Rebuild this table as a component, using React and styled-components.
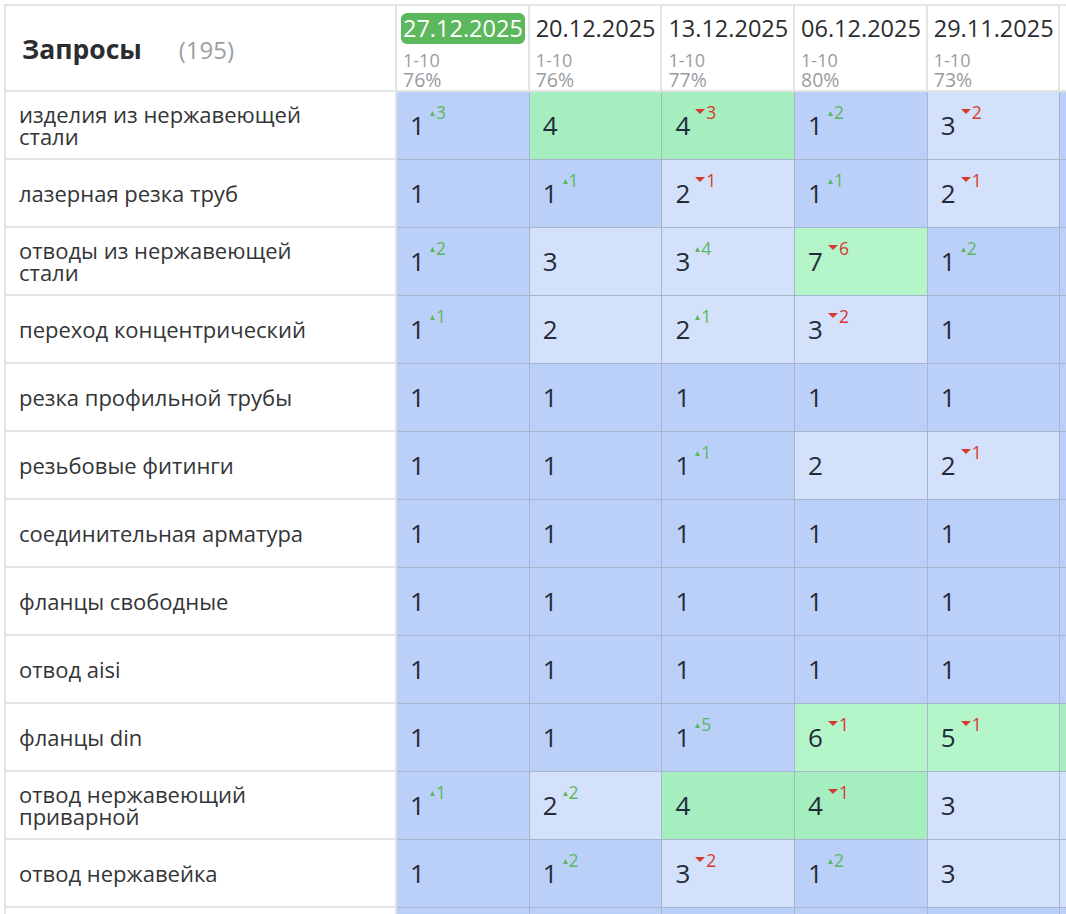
import React from "react";
import styled, { createGlobalStyle } from "styled-components";

const Global = createGlobalStyle`
  html, body { margin: 0; padding: 0; background: #fff; overflow: hidden; }
  body { font-family: "Open Sans", "Noto Sans", sans-serif; }
`;

const Page = styled.div`
  padding: 4px 0 0 4px;
  width: 1066px;
  height: 914px;
  box-sizing: border-box;
  overflow: hidden;
`;

const Grid = styled.div`
  display: grid;
  grid-template-columns: 391px repeat(6, 132.7px);
  grid-template-rows: 86px;
  grid-auto-rows: 68px;
  border-top: 2px solid #e3e3e3;
  border-left: 2px solid #e3e3e3;
  width: max-content;
`;

const TitleCell = styled.div`
  box-sizing: border-box;
  border-right: 2px solid #e3e3e3;
  border-bottom: 2px solid #e3e3e3;
  display: flex;
  align-items: center;
  padding: 2px 0 0 16px;
  gap: 37px;
`;

const Title = styled.span`
  font-size: 26.5px;
  font-weight: 700;
  color: #2b2d31;
`;

const Count = styled.span`
  font-size: 24px;
  color: #9b9ea4;
`;

const DateCell = styled.div`
  box-sizing: border-box;
  border-right: 2px solid #e3e3e3;
  border-bottom: 2px solid #e3e3e3;
  padding: 7px 0 0 4px;
  display: flex;
  flex-direction: column;
  align-items: flex-start;
  white-space: nowrap;
`;

const DateLabel = styled.span`
  font-size: 23.5px;
  line-height: 31px;
  height: 31px;
  padding: 0 2px;
  border-radius: 6px;
  color: ${(p) => (p.$current ? "#fff" : "#2b2d31")};
  background: ${(p) => (p.$current ? "#5cb85c" : "transparent")};
`;

const MetaBlock = styled.div`
  display: flex;
  flex-direction: column;
  margin-top: 7px;
  padding-left: 2px;
`;

const Meta = styled.span`
  font-size: ${(p) => p.$size}px;
  line-height: 19px;
  color: #9a9ca2;
`;

const NameCell = styled.div`
  box-sizing: border-box;
  border-right: 2px solid #e3e3e3;
  border-bottom: 2px solid #e3e3e3;
  display: flex;
  align-items: center;
  padding: 0 0 1px 13px;
  background: #fff;
`;

const Name = styled.span`
  max-width: 300px;
  font-size: 22px;
  line-height: 22px;
  color: #333538;
`;

const bg = {
  mid: "#bad0f9",
  light: "#d3e1fb",
  green: "#a4eebf",
  lgreen: "#b4f5ca",
};

const ValueCell = styled.div`
  box-sizing: border-box;
  border-right: 1.5px solid #a9b5cd;
  border-bottom: 1.5px solid #a9b5cd;
  background: ${(p) => bg[p.$tone]};
  display: flex;
  align-items: center;
  padding: 0 0 1px 13px;
`;

const Value = styled.span`
  font-size: 26px;
  line-height: 30px;
  color: #242b38;
`;

const Delta = styled.span`
  display: inline-flex;
  align-items: center;
  gap: 1px;
  margin-left: 5px;
  align-self: flex-start;
  margin-top: 11px;
  font-size: 17.5px;
  line-height: 18px;
  color: ${(p) => (p.$up ? "#5cb85c" : "#d63a2f")};
`;

const Tri = styled.svg`
  display: block;
  margin-top: ${(p) => (p.$up ? "2px" : "-2px")};
`;

const dates = [
  { d: "27.12.2025", pct: "76%", current: true },
  { d: "20.12.2025", pct: "76%" },
  { d: "13.12.2025", pct: "77%" },
  { d: "06.12.2025", pct: "80%" },
  { d: "29.11.2025", pct: "73%" },
  { d: "22.11.2025", pct: "75%" },
];

// value, delta (positive = up, negative = down)
const rows = [
  ["изделия из нержавеющей стали", [[1, 3], [4], [4, -3], [1, 2], [3, -2], [1]]],
  ["лазерная резка труб", [[1], [1, 1], [2, -1], [1, 1], [2, -1], [1]]],
  ["отводы из нержавеющей стали", [[1, 2], [3], [3, 4], [7, -6], [1, 2], [1]]],
  ["переход концентрический", [[1, 1], [2], [2, 1], [3, -2], [1], [1]]],
  ["резка профильной трубы", [[1], [1], [1], [1], [1], [1]]],
  ["резьбовые фитинги", [[1], [1], [1, 1], [2], [2, -1], [1]]],
  ["соединительная арматура", [[1], [1], [1], [1], [1], [1]]],
  ["фланцы свободные", [[1], [1], [1], [1], [1], [1]]],
  ["отвод aisi", [[1], [1], [1], [1], [1], [1]]],
  ["фланцы din", [[1], [1], [1, 5], [6, -1], [5, -1], [4]]],
  ["отвод нержавеющий приварной", [[1, 1], [2, 2], [4], [4, -1], [3], [3]]],
  ["отвод нержавейка", [[1], [1, 2], [3, -2], [1, 2], [3], [3]]],
  ["переход эксцентрический", [[1], [1], [1], [1], [1], [1]]],
];

const tone = (v) => (v === 1 ? "mid" : v <= 3 ? "light" : v === 4 ? "green" : "lgreen");

function Change({ n }) {
  const up = n > 0;
  return (
    <Delta $up={up}>
      {up ? (
        <Tri $up width="5" height="5" viewBox="0 0 5 5">
          <path d="M2.5 0 L5 5 L0 5 Z" fill="currentColor" />
        </Tri>
      ) : (
        <Tri width="10" height="5" viewBox="0 0 10 5">
          <path d="M0 0 L10 0 L5 5 Z" fill="currentColor" />
        </Tri>
      )}
      <span>{Math.abs(n)}</span>
    </Delta>
  );
}

export default function App() {
  return (
    <Page>
      <Global />
      <Grid>
        <TitleCell>
          <Title>Запросы</Title>
          <Count>(195)</Count>
        </TitleCell>
        {dates.map((x) => (
          <DateCell key={x.d}>
            <DateLabel $current={x.current}>{x.d}</DateLabel>
            <MetaBlock>
              <Meta $size={18}>1-10</Meta>
              <Meta $size={19.5}>{x.pct}</Meta>
            </MetaBlock>
          </DateCell>
        ))}
        {rows.map(([name, vals]) => (
          <React.Fragment key={name}>
            <NameCell>
              <Name>{name}</Name>
            </NameCell>
            {vals.map(([v, d], i) => (
              <ValueCell key={i} $tone={tone(v)}>
                <Value>{v}</Value>
                {d ? <Change n={d} /> : null}
              </ValueCell>
            ))}
          </React.Fragment>
        ))}
      </Grid>
    </Page>
  );
}
